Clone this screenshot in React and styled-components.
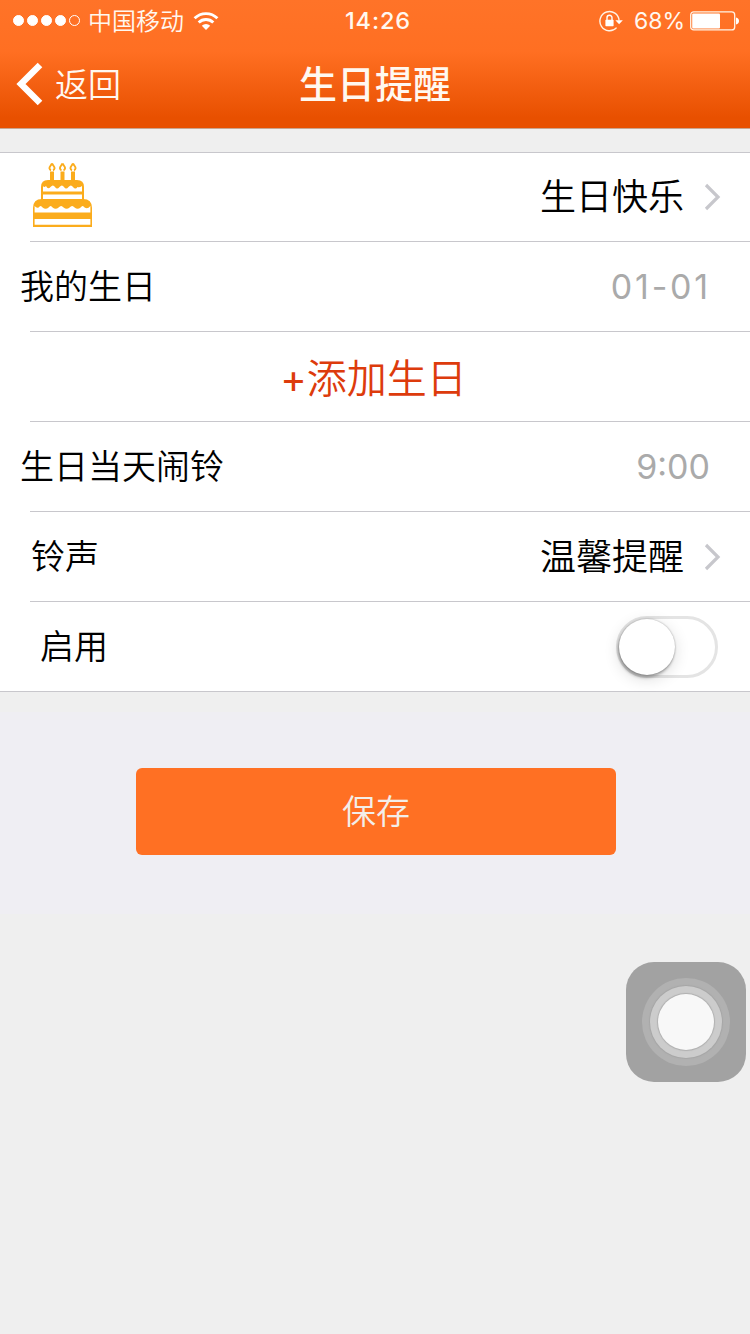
import styled, { createGlobalStyle } from 'styled-components'

const palette = {
  orange: '#ff7023',
  cake: '#fbac1c',
  line: '#c8c7cc',
  gray: '#aaaaaa',
  background: '#efefef',
}

const GlobalStyle = createGlobalStyle`
  * {
    box-sizing: border-box;
  }

  body {
    margin: 0;
    background: ${palette.background};
    font-family: Inter, 'Noto Sans CJK SC DemiLight', 'Noto Sans CJK SC', sans-serif;
  }
`

const Page = styled.div`
  position: relative;
  width: 750px;
  height: 1334px;
  overflow: hidden;
  background: ${palette.background};
`

const Header = styled.header`
  height: 129px;
  border-bottom: 1px solid #c9a58f;
  color: #fff8f0;
  background: linear-gradient(#ff7328 0, #ff6f22 52px, #e85000 118px);
`

const StatusBar = styled.div`
  display: grid;
  grid-template-columns: 1fr auto 1fr;
  align-items: center;
  height: 40px;
  padding: 1px 11px 0 13px;
  font-size: 24px;
  line-height: 36px;
`

const StatusGroup = styled.div`
  display: flex;
  align-items: center;
  justify-content: ${({ $end }) => ($end ? 'flex-end' : 'flex-start')};
`

const SignalDots = styled.div`
  display: flex;
  gap: 3px;
  margin-right: 8px;
`

const Dot = styled.i`
  width: 11px;
  height: 11px;
  border: 1px solid #fff;
  border-radius: 50%;
  background: ${({ $on }) => ($on ? '#fff' : 'transparent')};
`

const Carrier = styled.span`
  margin-right: 9px;
  padding-top: 2px;
`

const Time = styled.span`
  padding: 1px 0 0 4px;
  font-size: 23.5px;
  font-weight: 500;
  letter-spacing: 0.9px;
`

const Percent = styled.span`
  margin: 0 5px 0 11px;
  padding-top: 1px;
  font-size: 23px;
`

const NavBar = styled.div`
  display: grid;
  grid-template-columns: 1fr auto 1fr;
  align-items: center;
  height: 88px;
  padding: 0 16px;
`

const BackButton = styled.button`
  display: flex;
  align-items: center;
  gap: 12px;
  padding: 0;
  border: 0;
  background: none;
  color: inherit;
  font: inherit;
  font-size: 33px;
  line-height: 48px;

  span {
    padding-top: 2px;
  }
`

const Title = styled.h1`
  margin: 0;
  padding-bottom: 5px;
  font-family: 'Noto Sans CJK SC', sans-serif;
  font-size: 38px;
  font-weight: 500;
  line-height: 56px;
`

const List = styled.ul`
  margin: 23px 0 0;
  padding: 0;
  list-style: none;
  background: #fff;
  border-top: 1px solid ${palette.line};
  border-bottom: 1px solid ${palette.line};
`

const Row = styled.li`
  display: flex;
  align-items: center;
  justify-content: ${({ $center }) => ($center ? 'center' : 'space-between')};
  height: ${({ $first }) => ($first ? 88 : 89)}px;
  padding: 0 ${({ $right }) => $right || 0}px 0 ${({ $left }) => $left || 0}px;
`

const Divider = styled.li`
  height: 1px;
  margin-left: 30px;
  background: ${palette.line};
`

const Label = styled.span`
  padding-top: 1px;
  font-size: 34px;
  line-height: 50px;
  color: #000;
`

const Value = styled.span`
  display: flex;
  align-items: center;
  gap: 20px;
  font-size: 36px;
  line-height: 52px;
  color: #000;
`

const TimeValue = styled.span`
  font-size: 34px;
  letter-spacing: ${({ $spacing }) => $spacing || 0}px;
  color: ${palette.gray};
`

const AddButton = styled.button`
  padding: 4px 3px 0 0;
  border: 0;
  background: none;
  color: #dd3b0c;
  font: inherit;
  font-size: 40px;
  line-height: 58px;
`

const Switch = styled.div`
  display: flex;
  width: 102px;
  height: 62px;
  border: 3px solid #e4e4e4;
  border-radius: 31px;
  background: #fff;
`

const Thumb = styled.div`
  width: 56px;
  height: 56px;
  border-radius: 50%;
  background: #fff;
  box-shadow: 0 0 2px rgba(0, 0, 0, 0.35), -1px 3px 3px rgba(0, 0, 0, 0.25),
    0 4px 16px rgba(0, 0, 0, 0.14);
`

const Footer = styled.div`
  display: flex;
  justify-content: center;
  height: 202px;
  margin-top: 20px;
  padding: 56px 0 0 2px;
  background: #efeef3;
`

const SaveButton = styled.button`
  width: 480px;
  height: 87px;
  padding: 1px 0 0;
  border: 0;
  border-radius: 6px;
  background: ${palette.orange};
  color: #f3eee9;
  font: inherit;
  font-size: 34px;
  line-height: 50px;
`

// floats above the page, like the iOS AssistiveTouch button
const AssistiveTouch = styled.div`
  position: absolute;
  right: 4px;
  top: 962px;
  display: grid;
  place-items: center;
  width: 120px;
  height: 120px;
  border-radius: 28px;
  background: #a2a2a2;
`

const Ring = styled.div`
  display: grid;
  place-items: center;
  width: ${({ $size }) => $size}px;
  height: ${({ $size }) => $size}px;
  border-radius: 50%;
  background: ${({ $color }) => $color};
  box-shadow: ${({ $edge }) => ($edge ? `0 0 1px 1px ${$edge}` : 'none')};
`

const CakeSvg = styled.svg`
  margin-bottom: 4px;
`

const WifiIcon = () => (
  <svg width="26" height="20" viewBox="0 0 26 20" fill="none">
    <g stroke="#fff" strokeWidth="2.9">
      <path d="M1.6 7.3a16.2 16.2 0 0 1 22.8 0" />
      <path d="M5.7 11.5a10.4 10.4 0 0 1 14.6 0" />
    </g>
    <path d="M13 19l-4.2-4.3a6 6 0 0 1 8.4 0z" fill="#fff" />
  </svg>
)

const RotationLockIcon = () => (
  <svg width="24" height="22" viewBox="0 0 24 22" fill="none">
    <path
      d="M17.6 17.6A9.6 9.6 0 1 1 20.1 10.5"
      stroke="#fff3e6"
      strokeWidth="1.4"
    />
    <path d="M16.4 10.2h7.4L20.1 14.2z" fill="#fff" />
    <rect x="6.4" y="9.8" width="8.2" height="6.4" rx="0.6" fill="#fff" />
    <path d="M8 10.4V7.8a2.5 2.5 0 0 1 5 0v2.6" stroke="#fff" strokeWidth="1.4" />
  </svg>
)

const BatteryIcon = () => (
  <svg width="49" height="20" viewBox="0 0 49 20" fill="none">
    <rect x="0.7" y="0.9" width="44" height="18" rx="3" stroke="#fff3e6" strokeWidth="1.3" />
    <rect x="2.2" y="2.4" width="27.8" height="15" rx="1" fill="#fff" />
    <path d="M46 6.4c4 .6 4 6.4 0 7z" fill="#fff" />
  </svg>
)

const BackIcon = () => (
  <svg width="27" height="44" viewBox="0 0 27 44" fill="none">
    <path d="M24 3L5 22l19 19" stroke="#fff" strokeWidth="6.5" />
  </svg>
)

const ChevronIcon = () => (
  <svg width="17" height="28" viewBox="0 0 17 28" fill="none">
    <path d="M2 2l12 12L2 26" stroke="#c7c7cc" strokeWidth="3.2" />
  </svg>
)

const CakeIcon = () => (
  <CakeSvg width="62" height="66" viewBox="0 0 62 66" fill={palette.cake}>
    {[20, 30.5, 41].map((x) => (
      <g key={x} transform={`translate(${x} 0)`}>
        <path
          d="M0 1.5C1 3.5 2.6 4.5 2.6 6.2Q2.4 7.8 1 8.3M0 1.5C-1 3.5-2.6 4.5-2.6 6.2Q-2.4 7.8-1 8.3"
          fill="none"
          stroke={palette.cake}
          strokeWidth="1.9"
        />
        <rect x="-2" y="9.5" width="4" height="9.5" />
      </g>
    ))}
    <path d="M9 38V25q0-7 7-7h29q7 0 7 7v13z" />
    <path
      d="M11 24q1 2 3 0q2 4 4.5 1q2.5-3 4.5 0q2 3 4.5 0q2.5-3 4.5 0q2 3 4.5 0q2.5-3 4.5 0q2.5 3 4.5 0q2 1 4.5-1v5.5H11z"
      fill="#fff"
    />
    <path d="M11 32.5h39V37H11z" fill="#fff" />
    <path d="M1 65V46q0-9 9-9h41q9 0 9 9v19z" />
    <path
      d="M2.6 44q2 2.5 4 1.5q2-3 4 0q3 2.5 6 0q2-3 4 0q3 2.5 6 0q2.5-3 5 0q3 2.5 6 0q2.5-3 5 0q3 2.5 6 0q2-3 4 0q3 2 5.8-1.5v6.5H2.6z"
      fill="#fff"
    />
    <path d="M2.6 57h55.8v5.8H2.6z" fill="#fff" />
  </CakeSvg>
)

const App = () => {
  return (
    <Page>
      <GlobalStyle />
      <Header>
        <StatusBar>
          <StatusGroup>
            <SignalDots>
              {[true, true, true, true, false].map((on, i) => (
                <Dot key={i} $on={on} />
              ))}
            </SignalDots>
            <Carrier>中国移动</Carrier>
            <WifiIcon />
          </StatusGroup>
          <Time>14:26</Time>
          <StatusGroup $end>
            <RotationLockIcon />
            <Percent>68%</Percent>
            <BatteryIcon />
          </StatusGroup>
        </StatusBar>
        <NavBar>
          <BackButton>
            <BackIcon />
            <span>返回</span>
          </BackButton>
          <Title>生日提醒</Title>
        </NavBar>
      </Header>
      <List>
        <Row $first $left={32} $right={29}>
          <CakeIcon />
          <Value>
            生日快乐
            <ChevronIcon />
          </Value>
        </Row>
        <Divider />
        <Row $left={20} $right={39}>
          <Label>我的生日</Label>
          <TimeValue $spacing={2.8}>01-01</TimeValue>
        </Row>
        <Divider />
        <Row $center>
          <AddButton>+添加生日</AddButton>
        </Row>
        <Divider />
        <Row $left={20} $right={40}>
          <Label>生日当天闹铃</Label>
          <TimeValue>9:00</TimeValue>
        </Row>
        <Divider />
        <Row $left={31} $right={29}>
          <Label>铃声</Label>
          <Value>
            温馨提醒
            <ChevronIcon />
          </Value>
        </Row>
        <Divider />
        <Row $left={40} $right={32}>
          <Label>启用</Label>
          <Switch role="switch" aria-checked="false">
            <Thumb />
          </Switch>
        </Row>
      </List>
      <Footer>
        <SaveButton>保存</SaveButton>
      </Footer>
      <AssistiveTouch>
        <Ring $size={88} $color="#b1b1b1">
          <Ring $size={72} $color="#cccccc" $edge="#a6a6a6">
            <Ring $size={56} $color="#f8f8f8" $edge="#b0b0b0" />
          </Ring>
        </Ring>
      </AssistiveTouch>
    </Page>
  )
}

export default App
